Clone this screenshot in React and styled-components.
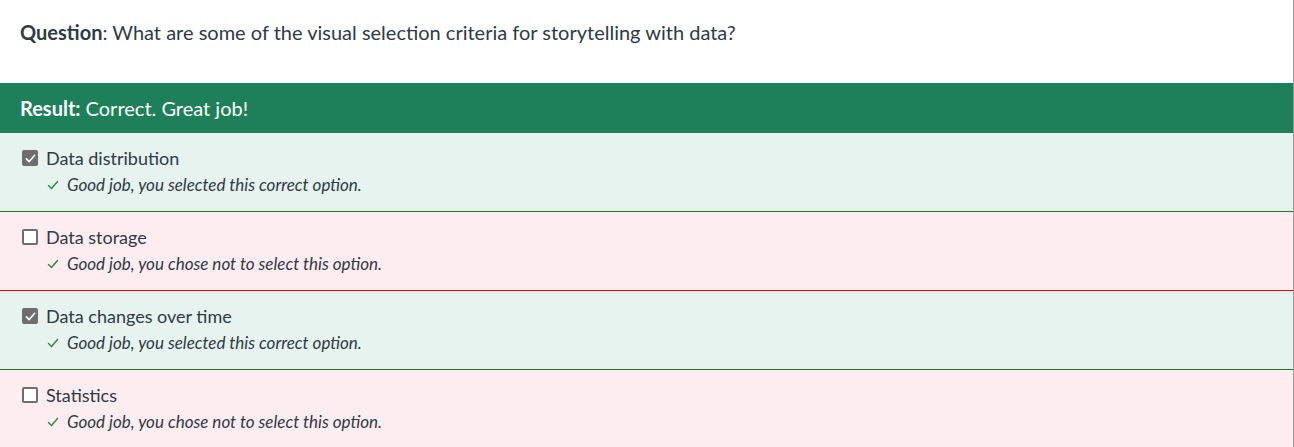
import React from "react";
import styled, { createGlobalStyle } from "styled-components";

const Global = createGlobalStyle`
  html, body { margin: 0; padding: 0; background: #ffffff; }
  body { font-family: Lato, "Open Sans", sans-serif; color: #2d3b45; }
`;

const Page = styled.div`
  width: 1293px;
  border-right: 1px solid #9a9a9a;
  min-height: 447px;
  background: #ffffff;
`;

const Question = styled.div`
  padding: 20px 20px 39px;
  font-size: 20px;
  line-height: 24px;
  color: #2d3b45;
  b { font-weight: 700; }
`;

const ResultBar = styled.div`
  height: 50px;
  display: flex;
  align-items: center;
  padding: 0 20px;
  background: #1d8059;
  color: #ffffff;
  font-size: 20px;
  b { font-weight: 700; }
`;

const Row = styled.div`
  padding: 14px 20px 16px 22px;
  background: ${(p) => (p.$selected ? "#e6f3ee" : "#fdedf0")};
  border-bottom: 1px solid ${(p) => (p.$selected ? "#1e7a1e" : "#ff0000")};
  &:last-child { border-bottom: none; }
`;

const LabelLine = styled.div`
  display: flex;
  align-items: center;
  gap: 8px;
  font-size: 18px;
  line-height: 22px;
  color: #2d3b45;
`;

const Box = styled.span`
  box-sizing: border-box;
  width: 16px;
  height: 16px;
  border-radius: 2px;
  display: inline-flex;
  align-items: center;
  justify-content: center;
  background: ${(p) => (p.$checked ? "#6e6e6e" : "#ffffff")};
  border: 2px solid #6e6e6e;
`;

const Feedback = styled.div`
  margin-top: 6px;
  padding-left: 25px;
  display: flex;
  align-items: center;
  gap: 8px;
  font-size: 17px;
  line-height: 20px;
  font-style: italic;
  color: #2d3b45;
`;

const Tick = ({ color, size = 12, width = 2 }) => (
  <svg width={size} height={size} viewBox="0 0 12 12" fill="none">
    <path d="M1.5 6.5 L4.5 9.5 L10.5 2.5" stroke={color} strokeWidth={width} strokeLinecap="round" strokeLinejoin="round" />
  </svg>
);

const options = [
  { label: "Data distribution", checked: true },
  { label: "Data storage", checked: false },
  { label: "Data changes over time", checked: true },
  { label: "Statistics", checked: false },
];

export default function App() {
  return (
    <>
      <Global />
      <Page>
        <Question>
          <b>Question</b>: What are some of the visual selection criteria for storytelling with data?
        </Question>
        <ResultBar>
          <b>Result:</b>&nbsp;Correct. Great job!
        </ResultBar>
        {options.map((o) => (
          <Row key={o.label} $selected={o.checked}>
            <LabelLine>
              <Box $checked={o.checked}>{o.checked && <Tick color="#ffffff" size={11} width={1.8} />}</Box>
              {o.label}
            </LabelLine>
            <Feedback>
              <Tick color="#2a8a3a" size={12} width={1.4} />
              {o.checked
                ? "Good job, you selected this correct option."
                : "Good job, you chose not to select this option."}
            </Feedback>
          </Row>
        ))}
      </Page>
    </>
  );
}
